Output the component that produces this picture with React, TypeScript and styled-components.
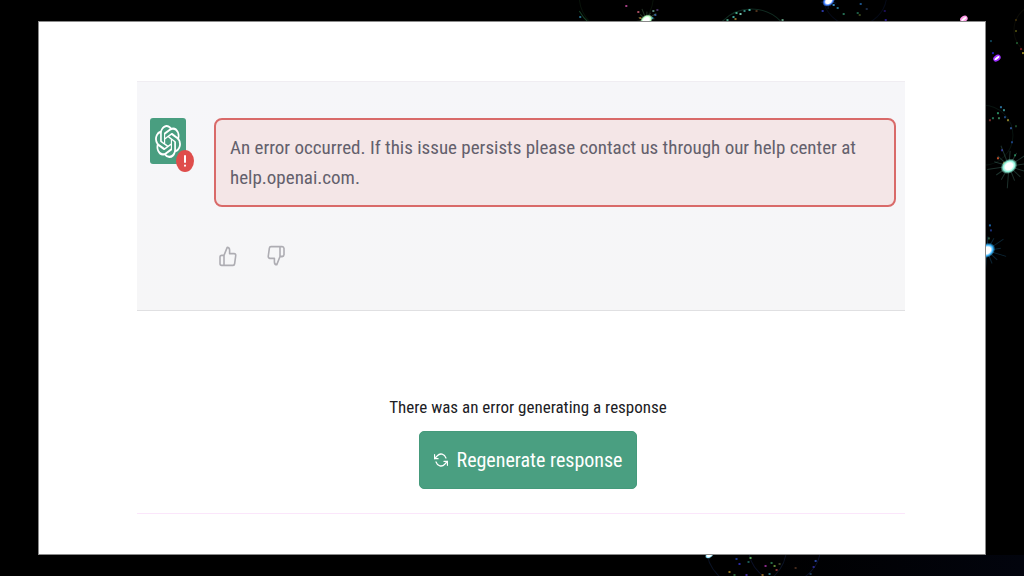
import React from "react";
import styled, { createGlobalStyle } from "styled-components";
import { SiOpenai } from "react-icons/si";

const GlobalStyle = createGlobalStyle`
  * { box-sizing: border-box; }
  body { margin: 0; background: #000; font-family: "Roboto Condensed", Roboto, "Liberation Sans", sans-serif; }
`;

const Stage = styled.div`
  position: relative;
  display: flex;
  min-height: 100vh;
  padding: 21px 38px 22px;
  background: #000;
  overflow: hidden;
`;

const Backdrop = styled.svg`
  position: absolute;
  inset: 0;
  width: 100%;
  height: 100%;
`;

const Slide = styled.main`
  position: relative;
  flex: 1;
  display: flex;
  flex-direction: column;
  padding: 59px 80px 40px 98px;
  border: 1px solid #8a8a8a;
  background: #fff;
`;

const Message = styled.section`
  display: grid;
  grid-template-columns: 36px 1fr;
  column-gap: 28px;
  padding: 36px 9px 40px 13px;
  border-top: 1px solid #f0edf2;
  border-bottom: 1px solid #e0e0e2;
  background: linear-gradient(#f6f6f9, #f6f6f7);
`;

const Avatar = styled.div`
  position: relative;
  display: grid;
  place-items: center;
  width: 36px;
  height: 46px;
  border-radius: 3px;
  background: #499e80;
  color: #fff;
`;

const Logo = styled(SiOpenai)`
  width: 26px;
  height: 33px;
`;

const Badge = styled.span`
  position: absolute;
  right: -8px;
  bottom: -8px;
  width: 18px;
  height: 22px;
  border-radius: 50%;
  background: #df4d4b;
`;

const Glyph = styled.svg<{ $w: number; $h: number }>`
  display: block;
  flex: none;
  width: ${(p) => p.$w}px;
  height: ${(p) => p.$h}px;
  fill: none;
  stroke: currentColor;
  stroke-linecap: round;
  stroke-linejoin: round;
`;

const Alert = styled.p`
  margin: 0;
  padding: 13px 14px 12px;
  border: 2px solid #d96a69;
  border-radius: 8px;
  background: #f4e6e7;
  color: #63606c;
  font-size: 19px;
  line-height: 30px;
`;

const Feedback = styled.div`
  display: flex;
  gap: 24px;
  padding: 36px 2px 0;
`;

const IconButton = styled.button`
  padding: 0;
  border: 0;
  background: none;
  color: #aeadb3;
  cursor: pointer;
`;

const Composer = styled.section`
  flex: 1;
  display: flex;
  flex-direction: column;
  align-items: center;
  gap: 12px;
  padding: 84px 0 24px 14px;
  border-bottom: 1px solid #fbe6fb;
`;

const Notice = styled.p`
  margin: 0;
  color: #202024;
  font-size: 17px;
  line-height: 24px;
`;

const Regenerate = styled.button`
  display: flex;
  align-items: center;
  gap: 9px;
  padding: 14px;
  border: 1px solid #459a7b;
  border-radius: 5px;
  background: #4a9f81;
  color: #fff;
  font-family: inherit;
  font-size: 20px;
  line-height: 28px;
  cursor: pointer;
`;

type Spark = { x: number; y: number; r: number; c: string; rays: number };
const sparks: Spark[] = [
  { x: 647, y: 20, r: 5, c: "#b8ffc0", rays: 12 },
  { x: 829, y: 1, r: 5, c: "#3c7dff", rays: 8 },
  { x: 1009, y: 166, r: 7, c: "#8ff5dc", rays: 22 },
  { x: 987, y: 250, r: 7, c: "#35b5ff", rays: 20 },
  { x: 710, y: 554, r: 3, c: "#9be8ff", rays: 4 },
];

const streaks = [
  { x: 964, y: 19, c: "#ff9be8" },
  { x: 997, y: 58, c: "#a030ff" },
];

const dots: [number, number, string][] = [
  [626, 5, "#c04a9a"], [638, 11, "#c45a70"], [580, 16, "#2b7fa0"], [640, 17, "#a06a20"],
  [653, 10, "#6a9a8a"], [655, 14, "#3a60b0"], [657, 9, "#503a70"], [652, 17, "#3aa0c0"],
  [733, 16, "#4ac0b0"], [736, 12, "#50c8a0"], [740, 13, "#8ae8d0"], [744, 10, "#3a9a90"],
  [749, 9, "#52d0c0"], [735, 18, "#a08030"], [727, 19, "#50b090"], [722, 21, "#a06030"],
  [782, 19, "#70b090"], [756, 10, "#5a3a20"], [833, 4, "#40a0e0"], [837, 7, "#2a80a0"],
  [822, 10, "#3040c0"], [843, 13, "#2a8060"], [857, 12, "#206a50"], [860, 3, "#2060a0"],
  [885, 19, "#3020a0"], [884, 10, "#201060"], [859, 14, "#405020"], [866, 8, "#203050"],
  [992, 52, "#2020c0"], [990, 40, "#104a60"], [1015, 30, "#505010"], [1016, 42, "#205a30"],
  [1020, 48, "#802020"], [1022, 52, "#a09020"], [1015, 19, "#40300a"],
  [1000, 106, "#3080b0"], [1003, 109, "#40a0a0"], [997, 112, "#30a070"], [992, 117, "#2a8060"],
  [998, 117, "#409060"], [1004, 116, "#205090"], [989, 119, "#803030"], [1007, 119, "#a09030"],
  [1010, 127, "#305aa0"], [1011, 141, "#204a90"], [1001, 149, "#3030a0"], [997, 157, "#e05a30"],
  [1003, 162, "#b08020"], [1014, 154, "#208050"], [1015, 125, "#205030"],
  [989, 224, "#2070c0"], [990, 229, "#203a90"], [988, 237, "#305a40"],
  [736, 557, "#2040a0"], [739, 562, "#3030c0"], [750, 556, "#60c060"], [748, 560, "#206a60"],
  [729, 570, "#a08020"], [746, 573, "#4a30b0"], [734, 573, "#307040"], [765, 564, "#a030a0"],
  [771, 561, "#308050"], [776, 568, "#a04040"], [774, 564, "#70a040"], [769, 572, "#308090"],
  [779, 562, "#4a5030"], [795, 566, "#503020"], [815, 559, "#3050c0"], [813, 565, "#3030a0"],
  [810, 572, "#204060"], [762, 573, "#a07020"],
];

function Sparkles() {
  return (
    <Backdrop viewBox="0 0 1024 576" preserveAspectRatio="xMaxYMin slice" aria-hidden="true">
      <defs>
        {sparks.map((s, i) => (
          <radialGradient key={i} id={`spark${i}`}>
            <stop offset="0" stopColor="#fff" />
            <stop offset="0.45" stopColor="#fff" />
            <stop offset="0.7" stopColor={s.c} />
            <stop offset="1" stopColor={s.c} stopOpacity="0" />
          </radialGradient>
        ))}
        <linearGradient id="haze" x1="0" y1="0" x2="1" y2="0">
          <stop offset="0" stopColor="#000" />
          <stop offset="1" stopColor="#02040d" />
        </linearGradient>
      </defs>
      <rect x="760" y="554" width="264" height="22" fill="url(#haze)" />
      <g fill="none" strokeWidth="1">
        <circle cx="617" cy="-4" r="37" stroke="#081209" />
        <path d="M580 11Q584 18 590 23" stroke="#164026" />
        <circle cx="752" cy="50" r="41" stroke="#102a20" />
        <circle cx="855" cy="-6" r="32" stroke="#050a18" />
        <circle cx="983" cy="135" r="30" stroke="#081410" />
        <circle cx="1040" cy="30" r="26" stroke="#0c0c06" />
        <circle cx="747" cy="546" r="40" stroke="#0a1224" />
        <circle cx="785" cy="546" r="36" stroke="#0b1028" />
      </g>
      {dots.map(([x, y, c]) => (
        <rect key={`${x}-${y}`} x={x} y={y} width="2" height="2" fill={c} fillOpacity="0.85" />
      ))}
      {sparks.map((s, i) => (
        <g key={i}>
          {Array.from({ length: 14 }, (_, k) => {
            const a = (k / 14) * Math.PI * 2 + 0.3;
            const len = s.rays * (k % 3 === 0 ? 1 : 0.7);
            return (
              <line
                key={k}
                x1={s.x}
                y1={s.y}
                x2={s.x + Math.cos(a) * len}
                y2={s.y + Math.sin(a) * len}
                stroke={s.c}
                strokeOpacity="0.2"
              />
            );
          })}
          <ellipse cx={s.x} cy={s.y} rx={s.r + 2} ry={s.r} fill={`url(#spark${i})`} transform={`rotate(-35 ${s.x} ${s.y})`} />
        </g>
      ))}
      {streaks.map((s) => (
        <g key={s.x} transform={`rotate(-35 ${s.x} ${s.y})`}>
          <ellipse cx={s.x} cy={s.y} rx="4" ry="3" fill={s.c} />
          <ellipse cx={s.x} cy={s.y} rx="3" ry="1" fill="#fff" />
        </g>
      ))}
    </Backdrop>
  );
}

export default function App() {
  return (
    <>
      <GlobalStyle />
      <Stage>
        <Sparkles />
        <Slide>
          <Message>
            <Avatar>
              <Logo preserveAspectRatio="none" aria-hidden="true" />
              <Badge role="img" aria-label="Error">
                <Glyph $w={18} $h={22} viewBox="0 0 18 22" strokeWidth="2">
                  <path d="M9 6v6M9 15.5v.2" />
                </Glyph>
              </Badge>
            </Avatar>
            <div>
              <Alert role="alert">
                An error occurred. If this issue persists please contact us through our help center at
                help.openai.com.
              </Alert>
              <Feedback>
                <IconButton type="button" aria-label="Good response">
                  <Glyph $w={24} $h={27} viewBox="0 0 24 24" preserveAspectRatio="none" strokeWidth="2">
                    <path transform="translate(2.4 2.2) scale(.8)" d="M14 9V5a3 3 0 0 0-3-3l-4 9v11h11.28a2 2 0 0 0 2-1.7l1.38-9a2 2 0 0 0-2-2.3zM7 22H4a2 2 0 0 1-2-2v-7a2 2 0 0 1 2-2h3" />
                  </Glyph>
                </IconButton>
                <IconButton type="button" aria-label="Bad response">
                  <Glyph $w={24} $h={27} viewBox="0 0 24 24" preserveAspectRatio="none" strokeWidth="2">
                    <path transform="translate(2.4 1.6) scale(.8)" d="M10 15v4a3 3 0 0 0 3 3l4-9V2H5.72a2 2 0 0 0-2 1.7l-1.38 9a2 2 0 0 0 2 2.3zm7-13h2.67A2.31 2.31 0 0 1 22 4v7a2.31 2.31 0 0 1-2.33 2H17" />
                  </Glyph>
                </IconButton>
              </Feedback>
            </div>
          </Message>
          <Composer>
            <Notice>There was an error generating a response</Notice>
            <Regenerate type="button">
              <Glyph $w={14} $h={16} viewBox="0 0 24 24" preserveAspectRatio="none" strokeWidth="2" aria-hidden="true">
                <path d="M1 4v6h6M23 20v-6h-6" />
                <path d="M20.49 9A9 9 0 0 0 5.64 5.64L1 10m22 4-4.64 4.36A9 9 0 0 1 3.51 15" />
              </Glyph>
              Regenerate response
            </Regenerate>
          </Composer>
        </Slide>
      </Stage>
    </>
  );
}
